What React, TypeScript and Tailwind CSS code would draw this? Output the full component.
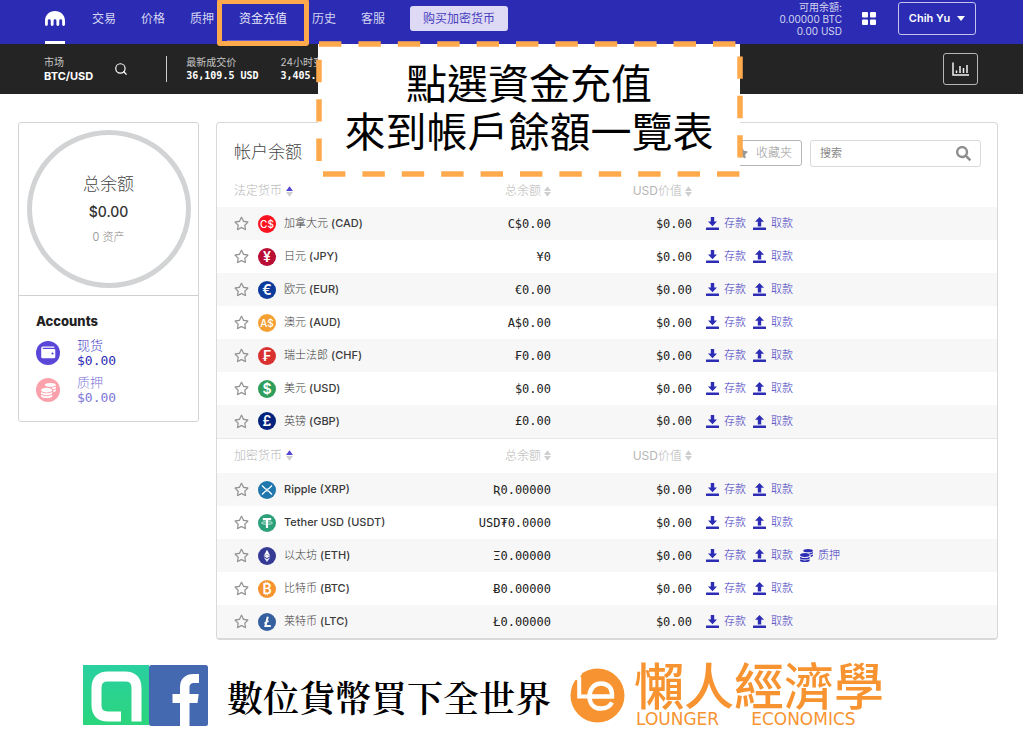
import React from "react";
import { FaCoins, FaRegStar, FaSearch, FaStar } from "react-icons/fa";
import { Search } from "lucide-react";

const MONO = "font-['DejaVu_Sans_Mono','Noto_Sans_CJK_SC',monospace]";

function KrakenMark() {
  return (
    <svg viewBox="0 0 24 18" className="h-[15px] w-5 fill-white" aria-hidden="true">
      <path d="M12 0C5.3 0 0 5 0 11.6v4.7a1.7 1.7 0 0 0 3.4 0v-4.7a1.7 1.7 0 0 1 3.5 0v4.7a1.7 1.7 0 0 0 3.4 0v-4.7a1.7 1.7 0 0 1 3.4 0v4.7a1.7 1.7 0 0 0 3.4 0v-4.7a1.7 1.7 0 0 1 3.5 0v4.7a1.7 1.7 0 0 0 3.4 0v-4.7C24 5 18.700 0 12 0Z" />
    </svg>
  );
}

function GridIcon() {
  return (
    <svg viewBox="0 0 14 13" className="h-[13px] w-[14px] fill-white" aria-hidden="true">
      <rect width="6" height="5.500" rx="1" />
      <rect x="8" width="6" height="5.500" rx="1" />
      <rect y="7.500" width="6" height="5.500" rx="1" />
      <rect x="8" y="7.500" width="6" height="5.500" rx="1" />
    </svg>
  );
}

function ChartIcon() {
  return (
    <svg viewBox="0 0 17 14" className="h-[14px] w-[17px]" fill="none" stroke="#f2f2f2" aria-hidden="true">
      <path d="M1 0.500V13H17" strokeWidth="1.500" />
      <path d="M4.500 11V8.500M8 11V4M11.500 11V6M15 11V3" strokeWidth="1.500" />
    </svg>
  );
}

function ArrowIcon({ up = false }: { up?: boolean }) {
  return (
    <svg viewBox="0 0 13 13" className="h-[13px] w-[13px] fill-[#2c2cb4]" aria-hidden="true">
      <path d={up ? "M6.500 0L11 4.700H8.200V9.500H4.800V4.700H2Z" : "M4.800 0H8.200V4.500H11L6.500 9.300L2 4.500H4.800Z"} />
      <rect y="10.500" width="13" height="2.500" rx="0.500" />
    </svg>
  );
}

function SortIcon({ active = false }: { active?: boolean }) {
  return (
    <svg viewBox="0 0 7 11" className="h-[11px] w-[7px]" aria-hidden="true">
      <path d="M3.500 0.300L7 5H0Z" fill={active ? "#5145d3" : "#cfcfcf"} />
      <path d="M3.500 10.700L7 6H0Z" fill="#cfcfcf" />
    </svg>
  );
}

function WalletIcon() {
  return (
    <svg viewBox="0 0 24 24" className="h-6 w-6" aria-hidden="true">
      <circle cx="12" cy="12" r="12" fill="#5a46d8" />
      <path d="M7 5.500H17.500Q18.500 5.500 18.500 6.800H7.500Q6.600 6.800 6.600 7.400T7.500 8H18Q19.300 8 19.300 9.300V16Q19.300 17.300 18 17.300H6.500Q5.200 17.300 5.200 16V7.200Q5.200 5.500 7 5.500Z" fill="#fff" />
      <circle cx="16.500" cy="12.500" r="1.100" fill="#5a46d8" />
    </svg>
  );
}

function XrpGlyph() {
  return (
    <svg viewBox="0 0 18 18" className="h-[18px] w-[18px]" fill="none" stroke="#fff" strokeWidth="1.200" aria-hidden="true">
      <path d="M4 4.500L7 7.500Q9 9.200 11 7.500L14 4.500M4 13.500L7 10.500Q9 8.800 11 10.500L14 13.500" />
    </svg>
  );
}

function EthGlyph() {
  return (
    <svg viewBox="0 0 18 18" className="h-[18px] w-[18px]" aria-hidden="true">
      <path d="M9 2.800L12.300 9L9 11L5.700 9Z" fill="#fff" />
      <path d="M9 12L12.300 10.200L9 15L5.700 10.200Z" fill="#e4e6fa" />
      <path d="M5.700 9L9 7.500L12.300 9" fill="none" stroke="#343a93" strokeWidth="0.500" />
    </svg>
  );
}

function TetherGlyph() {
  return (
    <svg viewBox="0 0 18 18" className="h-[18px] w-[18px]" aria-hidden="true">
      <path d="M4.800 4H13.200V6.300H10.100V14H7.900V6.300H4.800Z" fill="#fff" />
      <ellipse cx="9" cy="9" rx="5.500" ry="1.300" fill="none" stroke="#fff" strokeWidth="0.700" />
    </svg>
  );
}

function LtcGlyph() {
  return (
    <svg viewBox="0 0 18 18" className="h-[18px] w-[18px]" fill="none" stroke="#fff" aria-hidden="true">
      <path d="M9.800 3.800L7.400 13H12.800" strokeWidth="2" />
      <path d="M6 10.200L11 8" strokeWidth="1" />
    </svg>
  );
}

type Asset = {
  name: string;
  code: string;
  total: string;
  color: string;
  glyph: React.ReactNode;
  small?: boolean;
  staking?: boolean;
};

const fiat: Asset[] = [
  { name: "加拿大元", code: "CAD", total: "C$0.00", color: "bg-[#fd1320]", glyph: "C$", small: true },
  { name: "日元", code: "JPY", total: "¥0", color: "bg-[#b90f35]", glyph: "¥" },
  { name: "欧元", code: "EUR", total: "€0.00", color: "bg-[#0d3b9c]", glyph: "€" },
  { name: "澳元", code: "AUD", total: "A$0.00", color: "bg-[#f5a033]", glyph: "A$", small: true },
  { name: "瑞士法郎", code: "CHF", total: "₣0.00", color: "bg-[#d93030]", glyph: "₣" },
  { name: "美元", code: "USD", total: "$0.00", color: "bg-[#2f9e5b]", glyph: "$" },
  { name: "英镑", code: "GBP", total: "£0.00", color: "bg-[#04237d]", glyph: "£" },
];

const crypto: Asset[] = [
  { name: "Ripple", code: "XRP", total: "Ʀ0.00000", color: "bg-[#2077ad]", glyph: <XrpGlyph /> },
  { name: "Tether USD", code: "USDT", total: "USD₮0.0000", color: "bg-[#2ca07a]", glyph: <TetherGlyph /> },
  { name: "以太坊", code: "ETH", total: "Ξ0.00000", color: "bg-[#343a93]", glyph: <EthGlyph />, staking: true },
  { name: "比特币", code: "BTC", total: "Ƀ0.00000", color: "bg-[#f7932f]", glyph: "₿" },
  { name: "莱特币", code: "LTC", total: "Ł0.00000", color: "bg-[#355f9f]", glyph: <LtcGlyph /> },
];

function AssetGroup({ title, assets, divided = false }: { title: string; assets: Asset[]; divided?: boolean }) {
  return (
    <tbody>
      <tr className={divided ? "h-[35px] border-t border-[#e8e8e8] text-[#b5b5b5]" : "h-8 text-[#b5b5b5]"}>
        <th scope="col" className="pl-[17px] text-left font-light">
          <button className="flex items-center gap-1">
            {title}
            <SortIcon active />
          </button>
        </th>
        <th scope="col" className="font-light">
          <button className="ml-auto flex items-center gap-[3px]">
            总余额
            <SortIcon />
          </button>
        </th>
        <th scope="col" className="font-light">
          <button className="ml-auto flex items-center gap-[3px]">
            <span>
              <span className="font-normal">USD</span>价值
            </span>
            <SortIcon />
          </button>
        </th>
        <td />
      </tr>
      {assets.map((a) => (
        <tr key={a.code} className="h-[33px] odd:bg-white even:bg-[#f7f7f7]">
          <td className="pl-[17px]">
            <div className="flex items-center">
              <button aria-label={`收藏 ${a.code}`}>
                <FaRegStar className="h-[15px] w-[15px] text-[#949494]" />
              </button>
              <span
                className={`ml-[9px] flex h-[18px] w-[18px] shrink-0 items-center justify-center rounded-full leading-none text-white ${a.color} ${a.small ? "text-[10px] font-medium" : "text-sm font-semibold"}`}
              >
                {a.glyph}
              </span>
              <span className="ml-2 text-[11px] whitespace-nowrap text-[#3a3a3a]">
                <span className={a.name.charCodeAt(0) < 128 ? "font-medium" : "font-light"}>{a.name}</span>{" "}
                <span className="font-medium">({a.code})</span>
              </span>
            </div>
          </td>
          <td className={`text-right whitespace-nowrap text-[#222] ${MONO}`}>{a.total}</td>
          <td className={`text-right text-[#222] ${MONO}`}>$0.00</td>
          <td className="pl-[14px] text-[11px] font-light text-[#3d35bd]">
            <div className="flex items-center gap-[7px]">
              <a href="#deposit" className="flex items-center gap-[5px]">
                <ArrowIcon />
                存款
              </a>
              <a href="#withdraw" className="flex items-center gap-[5px]">
                <ArrowIcon up />
                取款
              </a>
              {a.staking && (
                <a href="#stake" className="flex items-center gap-[5px]">
                  <FaCoins className="h-[13px] w-[13px] text-[#2c2cb4]" />
                  质押
                </a>
              )}
            </div>
          </td>
        </tr>
      ))}
    </tbody>
  );
}

function TopBar() {
  return (
    <header className="flex h-11 items-stretch justify-between bg-[#2b2cb3] pr-[47px] pl-[45px] text-[#d5d5f2]">
      <div className="flex items-stretch">
        <a href="#home" aria-label="Kraken" className="flex flex-col justify-between pt-[11px]">
          <KrakenMark />
          <span className="h-[3px] w-5 bg-white" />
        </a>
        <nav className="ml-[27px] flex items-stretch gap-[25px] pb-[7px] text-xs">
          <a href="#trade" className="flex items-center">交易</a>
          <a href="#prices" className="flex items-center">价格</a>
          <a href="#staking" className="flex items-center">质押</a>
          <span className="relative flex items-center">
            <a href="#funding" className="text-[#e6e6fa]">资金充值</a>
            <span className="absolute -inset-x-3 -bottom-1 h-px bg-[#6d5fcf]" />
            <span className="absolute -inset-x-[22px] -top-px -bottom-[9px] rounded-[3px] border-[5px] border-[#ffa94d]" />
          </span>
          <a href="#history" className="flex items-center">历史</a>
          <a href="#support" className="flex items-center">客服</a>
          <button className="mt-[6px] h-[25px] rounded-[3px] bg-[#dedaf6] px-[13px] text-[#4740bd]">购买加密货币</button>
        </nav>
      </div>
      <div className="flex items-start">
        <div className="pt-px text-right text-[10px] leading-3">
          可用余額:
          <br />
          0.00000 BTC
          <br />
          0.00 USD
        </div>
        <button aria-label="应用" className="mt-3 ml-5">
          <GridIcon />
        </button>
        <button className="mt-[2px] ml-[22px] flex h-[33px] w-[78px] items-center justify-center gap-[7px] rounded-[3px] border border-[#c3c3ec] text-[11px] font-semibold text-white">
          Chih Yu
          <svg viewBox="0 0 8 5" className="h-[5px] w-2 fill-white" aria-hidden="true">
            <path d="M0 0H8L4 5Z" />
          </svg>
        </button>
      </div>
    </header>
  );
}

function MarketBar() {
  return (
    <section className="flex h-[50px] items-center justify-between bg-[#242424] pr-[45px] pl-11 text-[10px] leading-[14px] text-[#c4c4c4]">
      <div className="flex items-center">
        <div>
          <div>市场</div>
          <div className="text-[11px] font-bold text-white">BTC/USD</div>
        </div>
        <button aria-label="查找市场" className="ml-[21px]">
          <Search className="h-[14px] w-[14px] text-white" />
        </button>
        <div className="ml-[38px] h-[26px] w-px bg-[#d0d0d0]" />
        <div className="ml-[19px]">
          <div>最新成交价</div>
          <div className={`font-bold text-white ${MONO}`}>36,109.5 USD</div>
        </div>
        <div className="ml-[22px]">
          <div>24小时变</div>
          <div className={`font-bold text-white ${MONO}`}>3,405.</div>
        </div>
      </div>
      <button aria-label="图表" className="flex h-8 w-[35px] items-center justify-center rounded-[3px] border border-[#b5b5b5]">
        <ChartIcon />
      </button>
    </section>
  );
}

function Callout() {
  return (
    <div className="absolute top-[44px] left-[318px] h-[130px] w-[422px] bg-white pt-[13px] text-center font-['Noto_Sans_CJK_TC',sans-serif] text-[41px] leading-[48px] text-black">
      <p>點選資金充值</p>
      <p>來到帳戶餘額一覽表</p>
      <svg viewBox="0 0 422 130" className="absolute inset-0 h-full w-full overflow-visible" aria-hidden="true">
        <path d="M1 0H422V130H1Z" fill="none" stroke="#ffa94d" strokeWidth="5.500" strokeDasharray="22.400 17" />
      </svg>
    </div>
  );
}

function BalanceCard() {
  return (
    <aside className="w-[181px] shrink-0 self-start rounded-[3px] border border-[#d4d4d4]">
      <div className="flex h-[173px] items-center justify-center border-b border-[#cfd0d1]">
        <div className="flex h-[158px] w-[164px] flex-col items-center justify-center rounded-[50%] border-[5px] border-[#d1d3d4]">
          <div className="text-[17px] leading-[28px] font-light text-[#444]">总余额</div>
          <div className="text-sm leading-[27px] font-medium text-[#333]">$0.00</div>
          <div className="text-[11px] leading-[24px] font-light text-[#888]">0 资产</div>
        </div>
      </div>
      <div className="px-[17px] pt-[15px] pb-[15px]">
        <h2 className="text-[13px] leading-5 font-extrabold text-[#222]">Accounts</h2>
        <a href="#spot" className="mt-[6px] flex items-center gap-[17px] text-[13px] leading-4 text-[#4a42c6]">
          <WalletIcon />
          <span>
            <span className="block font-light">现货</span>
            <span className={`block ${MONO} text-[#2c2cb4]`}>$0.00</span>
          </span>
        </a>
        <a href="#staked" className="mt-[5px] flex items-center gap-[17px] text-[13px] leading-4 text-[#7d76d8]">
          <span className="flex h-6 w-6 items-center justify-center rounded-full bg-[#fba1ac]">
            <FaCoins className="h-[15px] w-[15px] text-white" />
          </span>
          <span>
            <span className="block font-light">质押</span>
            <span className={`block ${MONO}`}>$0.00</span>
          </span>
        </a>
      </div>
    </aside>
  );
}

function BalanceTable() {
  return (
    <section className="min-w-0 flex-1 overflow-hidden rounded-[4px] border border-b-2 border-[#d9d9d9]">
      <div className="flex h-[52px] items-center justify-between pt-2 pr-4 pl-[17px]">
        <h1 className="text-[17px] font-light text-[#444]">帐户余额</h1>
        <div className="flex items-center gap-2">
          <button className="flex h-[26px] items-center gap-2 rounded-[3px] border border-[#b5b5b5] px-[9px] text-xs font-light text-[#999]">
            <FaStar className="h-3 w-3" />
            收藏夹
          </button>
          <label className="flex h-[27px] w-[171px] items-center rounded-[3px] border border-[#d9d9d9] px-[9px]">
            <input
              type="text"
              aria-label="搜索"
              placeholder="搜索"
              className="h-full min-w-0 flex-1 bg-transparent text-[11px] outline-none placeholder:text-[#888]"
            />
            <FaSearch className="h-[15px] w-[15px] text-[#8e8e8e]" />
          </label>
        </div>
      </div>
      <table className="w-full table-fixed border-collapse text-xs">
        <colgroup>
          <col className="w-[214px]" />
          <col className="w-[120px]" />
          <col className="w-[141px]" />
          <col />
        </colgroup>
        <AssetGroup title="法定货币" assets={fiat} />
        <AssetGroup title="加密货币" assets={crypto} divided />
      </table>
    </section>
  );
}

function Footer() {
  return (
    <footer className="mt-[23px] flex items-center pl-[83px]">
      <svg viewBox="0 0 66 60" className="h-[60px] w-[66px]" role="img" aria-label="App">
        <defs>
          <linearGradient id="green" x1="0" y1="0" x2="0" y2="1">
            <stop offset="0" stopColor="#2ad0a0" />
            <stop offset="1" stopColor="#2bd57c" />
          </linearGradient>
        </defs>
        <rect width="66" height="60" fill="url(#green)" />
        <path d="M38 51.500H25Q13.500 51.500 13.500 40V23Q13.500 11.500 25 11.500H42Q53.500 11.500 53.500 23V56.500" fill="none" stroke="#fff" strokeWidth="10" />
      </svg>
      <svg viewBox="0 0 59 61" className="h-[61px] w-[59px]" role="img" aria-label="Facebook">
        <rect width="59" height="61" rx="2.500" fill="#4569b0" />
        <path d="M31 61V38H23.500V29H31V22.500C31 13.500 36.500 9 44.500 9H50V18H45.500C41.500 18 40.500 19.800 40.500 23V29H49.700L48.500 38H40.500V61Z" fill="#fff" />
      </svg>
      <p className="ml-[19px] pt-1 font-['Noto_Serif_CJK_TC','Noto_Sans_CJK_TC',serif] text-4xl font-semibold text-black">數位貨幣買下全世界</p>
      <svg viewBox="0 0 55 55" className="ml-[19px] h-[55px] w-[55px]" role="img" aria-label="Lounger Economics">
        <circle cx="27.500" cy="27.500" r="27" fill="#f79431" />
        <path d="M0 0H12V6L8 12H0Z" fill="#fff" />
        <path d="M9.200 9V28.500H20" fill="none" stroke="#fff" strokeWidth="4" />
        <path d="M19 28.500H42C42.500 20 38 15.500 31 15.500C24 15.500 19.500 21 19.500 28.500C19.500 36 24 40.500 31 40.500C36 40.500 40 38 42 34.500" fill="none" stroke="#fff" strokeWidth="4.500" />
      </svg>
      <div className="ml-[9px] text-[#f79431]">
        <div className="font-['Noto_Sans_CJK_TC',sans-serif] text-[50px] leading-10 font-medium">懶人經濟學</div>
        <div className="mt-2 flex gap-8 pl-[2px] font-['DejaVu_Sans',sans-serif] text-[17px] leading-4">
          <span>LOUNGER</span>
          <span>ECONOMICS</span>
        </div>
      </div>
    </footer>
  );
}

export default function App() {
  return (
    <div className="relative min-h-screen bg-white pr-[3px] font-[Inter,'Noto_Sans_CJK_SC',sans-serif]">
      <TopBar />
      <MarketBar />
      <main className="flex gap-[17px] pt-7 pr-[25px] pl-[18px]">
        <BalanceCard />
        <BalanceTable />
      </main>
      <Footer />
      <Callout />
    </div>
  );
}
